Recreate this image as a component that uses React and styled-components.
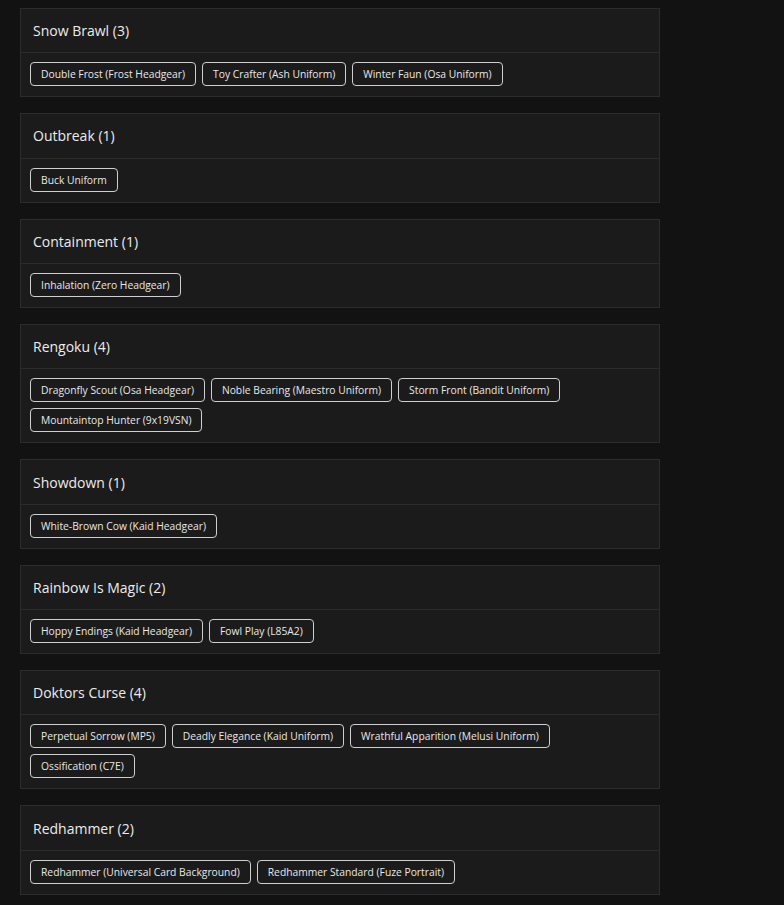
import React from 'react';
import styled, { createGlobalStyle } from 'styled-components';

const GlobalStyle = createGlobalStyle`
  html, body {
    margin: 0;
    padding: 0;
    background: #121212;
  }

  body {
    font-family: 'Open Sans', 'Liberation Sans', sans-serif;
    color: #e6e6e6;
  }
`;

const Page = styled.div`
  padding: 8px 20px 12px;
  width: 640px;
`;

const Card = styled.section`
  background: #1b1b1b;
  border: 1px solid #2c2c2c;
  margin-bottom: 16px;
`;

const CardHeader = styled.h3`
  margin: 0;
  height: 43.3px;
  display: flex;
  align-items: center;
  padding: 0 12px;
  font-size: 14px;
  font-weight: 500;
  color: #ececec;
  border-bottom: 1px solid #2c2c2c;
`;

const CardBody = styled.div`
  display: flex;
  flex-wrap: wrap;
  gap: 6.2px 6px;
  padding: 9px 9px 10px;
`;

const Tag = styled.span`
  display: inline-flex;
  align-items: center;
  height: 24px;
  box-sizing: border-box;
  padding: 0 10px;
  border: 1px solid #cfcfcf;
  border-radius: 4px;
  font-size: 10.3px;
  color: #e8e8e8;
  white-space: nowrap;
`;

const events = [
  {
    name: 'Snow Brawl',
    items: ['Double Frost (Frost Headgear)', 'Toy Crafter (Ash Uniform)', 'Winter Faun (Osa Uniform)'],
  },
  { name: 'Outbreak', items: ['Buck Uniform'] },
  { name: 'Containment', items: ['Inhalation (Zero Headgear)'] },
  {
    name: 'Rengoku',
    items: [
      'Dragonfly Scout (Osa Headgear)',
      'Noble Bearing (Maestro Uniform)',
      'Storm Front (Bandit Uniform)',
      'Mountaintop Hunter (9x19VSN)',
    ],
  },
  { name: 'Showdown', items: ['White-Brown Cow (Kaid Headgear)'] },
  { name: 'Rainbow Is Magic', items: ['Hoppy Endings (Kaid Headgear)', 'Fowl Play (L85A2)'] },
  {
    name: 'Doktors Curse',
    items: [
      'Perpetual Sorrow (MP5)',
      'Deadly Elegance (Kaid Uniform)',
      'Wrathful Apparition (Melusi Uniform)',
      'Ossification (C7E)',
    ],
  },
  {
    name: 'Redhammer',
    items: ['Redhammer (Universal Card Background)', 'Redhammer Standard (Fuze Portrait)'],
  },
];

const App = () => {
  return (
    <>
      <GlobalStyle />
      <Page>
        {events.map((ev) => (
          <Card key={ev.name}>
            <CardHeader>
              {ev.name} ({ev.items.length})
            </CardHeader>
            <CardBody>
              {ev.items.map((item) => (
                <Tag key={item}>{item}</Tag>
              ))}
            </CardBody>
          </Card>
        ))}
      </Page>
    </>
  );
};

export default App;
